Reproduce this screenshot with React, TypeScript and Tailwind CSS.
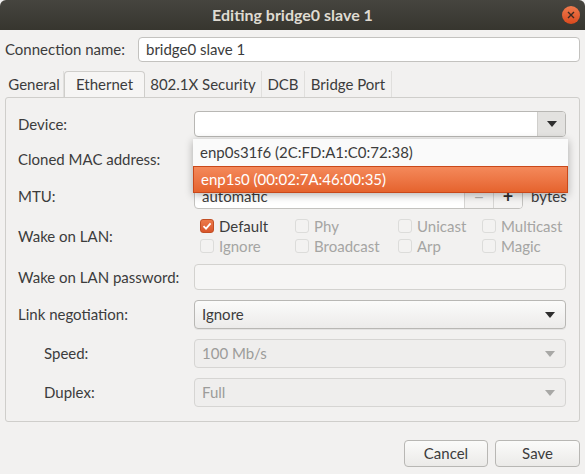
import React from 'react';

const font = { fontFamily: 'Lato, "Noto Sans", sans-serif' };

function Arrow({ disabled }: { disabled?: boolean }) {
  return (
    <svg width="10" height="6" viewBox="0 0 10 6">
      <path d="M0 0 L10 0 L5 6 Z" fill={disabled ? '#a8a8a6' : '#2e2e2e'} />
    </svg>
  );
}

function Check({ checked, label, disabled }: { checked?: boolean; label: string; disabled?: boolean }) {
  return (
    <div className="flex items-center gap-[5px] h-[20px]">
      {checked ? (
        <span className="w-[14px] h-[14px] rounded-[3px] bg-gradient-to-b from-[#ec7a4a] to-[#d9552a] border border-[#c24f24] flex items-center justify-center">
          <svg width="10" height="10" viewBox="0 0 10 10">
            <path d="M1.5 5.2 L4 7.6 L8.6 2.4" stroke="#fff" strokeWidth="1.8" fill="none" />
          </svg>
        </span>
      ) : (
        <span className="w-[14px] h-[14px] rounded-[3px] border border-[#dcdcda] bg-[#f3f2f1]" />
      )}
      <span className={disabled ? 'text-[#a5a5a3]' : 'text-[#3c3c3c]'}>{label}</span>
    </div>
  );
}

function Row({ label, indent, h, children }: { label: string; indent?: boolean; h: string; children: React.ReactNode }) {
  return (
    <div className={`flex items-center ${h}`}>
      <div className={`w-[176px] shrink-0 ${indent ? 'pl-[26px]' : ''}`}>{label}</div>
      <div className="w-[372px] h-full">{children}</div>
    </div>
  );
}

function Combo({ value, disabled }: { value: string; disabled?: boolean }) {
  return (
    <div
      className={`h-full rounded-[4px] border flex items-center justify-between pl-[7px] pr-[10px] ${
        disabled
          ? 'border-[#d6d5d3] bg-[#efeeed] text-[#9c9c9a]'
          : 'border-[#b8b7b4] bg-gradient-to-b from-[#fbfbfa] to-[#ecebea] text-[#3c3c3c] shadow-[0_1px_0_rgba(0,0,0,0.06)]'
      }`}
    >
      <span>{value}</span>
      <Arrow disabled={disabled} />
    </div>
  );
}

export default function App() {
  return (
    <div className="w-[585px] h-[474px] bg-[#f2f1f0] text-[15px] text-[#3c3c3c] flex flex-col" style={font}>
      <div className="h-[30px] shrink-0 bg-gradient-to-b from-[#46453f] to-[#37362f] flex items-center justify-center relative rounded-t-[6px]">
        <span className="font-bold text-[#dfdbd2] text-[16px]">Editing bridge0 slave 1</span>
        <span className="absolute right-[5px] top-[6px] w-[18px] h-[18px] rounded-full bg-gradient-to-b from-[#f07a4c] to-[#d9491c] flex items-center justify-center">
          <svg width="8" height="8" viewBox="0 0 8 8">
            <path d="M1 1 L7 7 M7 1 L1 7" stroke="#3a2a22" strokeWidth="1.4" />
          </svg>
        </span>
      </div>

      <div className="flex items-center h-[25px] mt-[7px] pl-[5px] pr-[5px]">
        <div className="w-[133px]">Connection name:</div>
        <div className="flex-1 h-full rounded-[4px] border border-[#c3c2bf] bg-white flex items-center pl-[7px]">
          bridge0 slave 1
        </div>
      </div>

      <div className="flex h-[27px] mt-[8px] pl-[5px] items-end">
        <div className="h-[26px] w-[59px] flex items-center justify-center border-r border-[#e0dfdd]">General</div>
        <div className="h-[27px] w-[81px] flex items-center justify-center bg-[#f6f5f4] border border-b-0 border-[#cfcecb] rounded-t-[4px] relative top-[1px] pb-[1px]">
          Ethernet
        </div>
        <div className="h-[26px] w-[117px] flex items-center justify-center border-r border-[#e0dfdd]">802.1X Security</div>
        <div className="h-[26px] w-[43px] flex items-center justify-center border-r border-[#e0dfdd]">DCB</div>
        <div className="h-[26px] w-[87px] flex items-center justify-center border-r border-[#e0dfdd]">Bridge Port</div>
      </div>

      <div className="mx-[5px] w-[575px] h-[325px] border border-[#cfcecb] rounded-[3px] pl-[12px] pt-[13px] flex flex-col relative">
        <Row label="Device:" h="h-[26px]">
          <div className="h-full rounded-[4px] border border-[#b8b7b4] bg-white flex overflow-hidden">
            <div className="flex-1" />
            <div className="w-[28px] h-full bg-[#e3e2e0] border-l border-[#d0cfcc] flex items-center justify-center">
              <Arrow />
            </div>
          </div>
        </Row>
        <div className="h-[9px]" />
        <Row label="Cloned MAC address:" h="h-[26px]">
          <div className="h-full rounded-[4px] border border-[#c3c2bf] bg-white" />
        </Row>
        <div className="h-[11px]" />
        <div className="flex items-center h-[26px]">
          <div className="w-[176px] shrink-0">MTU:</div>
          <div className="w-[329px] h-full rounded-[4px] border border-[#c3c2bf] bg-white flex overflow-hidden">
            <div className="flex-1 pl-[7px] flex items-center">automatic</div>
            <div className="w-[29px] border-l border-[#d6d5d3] bg-[#f4f3f2] flex items-center justify-center text-[#b0afad] text-[18px]">−</div>
            <div className="w-[29px] border-l border-[#d6d5d3] bg-[#f4f3f2] flex items-center justify-center text-[#2e2e2e] text-[18px] font-bold">+</div>
          </div>
          <div className="ml-[8px]">bytes</div>
        </div>
        <div className="h-[7px]" />
        <Row label="Wake on LAN:" h="h-[40px]">
          <div className="grid grid-cols-[95px_103px_84px_90px] pl-[6px]">
            <Check checked label="Default" />
            <Check label="Phy" disabled />
            <Check label="Unicast" disabled />
            <Check label="Multicast" disabled />
            <Check label="Ignore" disabled />
            <Check label="Broadcast" disabled />
            <Check label="Arp" disabled />
            <Check label="Magic" disabled />
          </div>
        </Row>
        <div className="h-[8px]" />
        <Row label="Wake on LAN password:" h="h-[26px]">
          <div className="h-full rounded-[4px] border border-[#d3d2cf] bg-[#f6f5f4]" />
        </Row>
        <div className="h-[10px]" />
        <Row label="Link negotiation:" h="h-[29px]">
          <Combo value="Ignore" />
        </Row>
        <div className="h-[10px]" />
        <Row label="Speed:" indent h="h-[29px]">
          <Combo value="100 Mb/s" disabled />
        </Row>
        <div className="h-[10px]" />
        <Row label="Duplex:" indent h="h-[29px]">
          <Combo value="Full" disabled />
        </Row>

        <div className="absolute left-[187px] top-[41px] w-[375px] bg-[#fafafa] shadow-[0_2px_8px_rgba(0,0,0,0.3)] flex flex-col">
          <div className="h-[27px] flex items-center pl-[7px] text-[#3c3c3c]">enp0s31f6 (2C:FD:A1:C0:72:38)</div>
          <div className="h-[27px] flex items-center pl-[7px] text-white bg-gradient-to-b from-[#f4895a] to-[#e5632d] border border-[#c9481a]">
            enp1s0 (00:02:7A:46:00:35)
          </div>
        </div>
      </div>

      <div className="flex justify-end gap-[7px] pr-[5px] mt-[18px]">
        <button className="w-[84px] h-[27px] rounded-[4px] border border-[#b8b7b4] bg-gradient-to-b from-[#fbfbfa] to-[#ebeae8] text-[#3c3c3c]">Cancel</button>
        <button className="w-[85px] h-[27px] rounded-[4px] border border-[#b8b7b4] bg-gradient-to-b from-[#fbfbfa] to-[#ebeae8] text-[#3c3c3c]">Save</button>
      </div>
    </div>
  );
}
